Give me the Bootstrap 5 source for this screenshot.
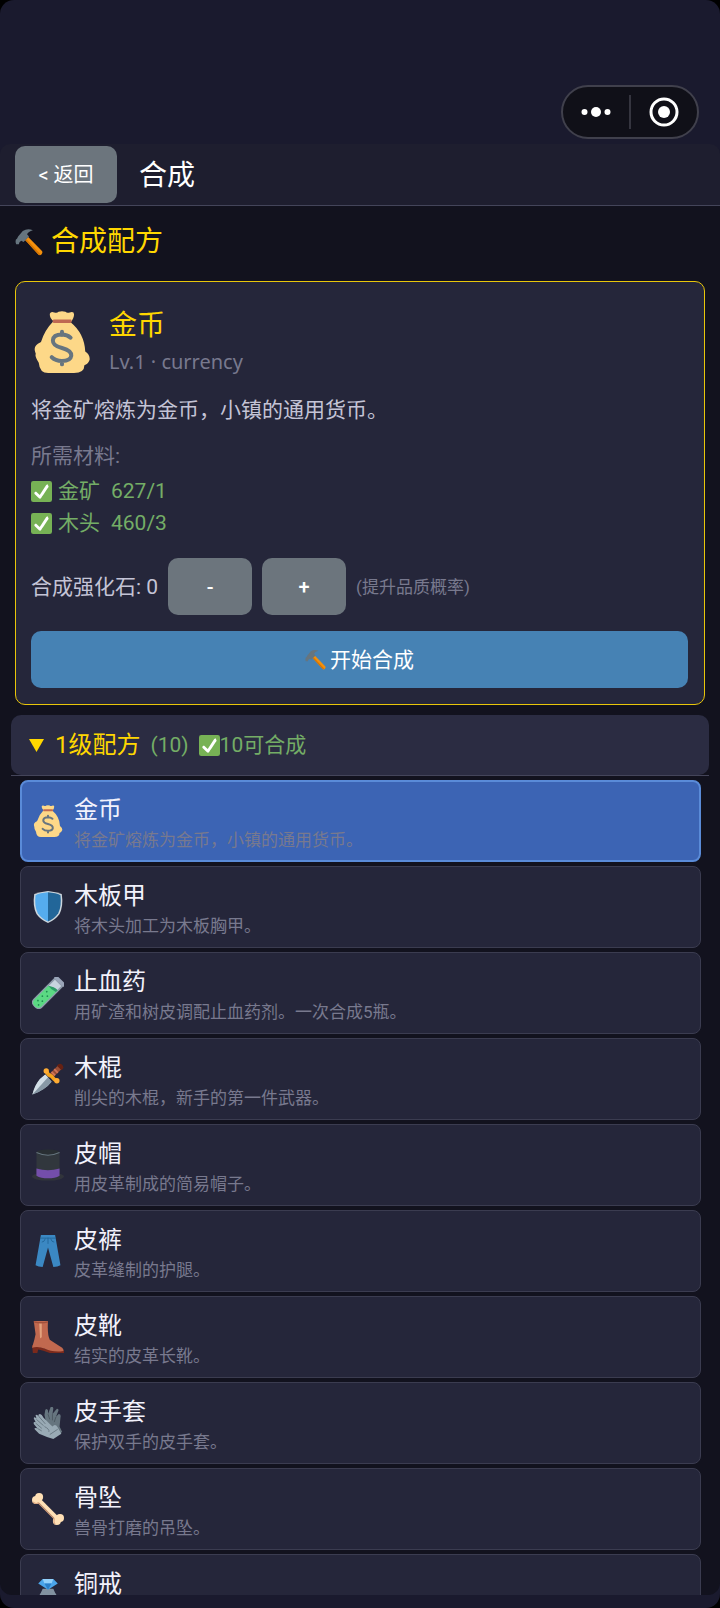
<!DOCTYPE html>
<html lang="zh-CN" data-bs-theme="dark">
<head>
<meta charset="utf-8">
<meta name="viewport" content="width=device-width, initial-scale=1">
<title>合成</title>
<link href="https://cdn.jsdelivr.net/npm/bootstrap@5.3.0/dist/css/bootstrap.min.css" rel="stylesheet">
<style>
  html { background: #000; }
  body { background: #000; color: #e8e8f4; font-family: Roboto, "Noto Sans CJK SC", sans-serif; font-size: 21px; line-height: 32px; }
  .app { background: #1a1a2e; border-radius: 14px; overflow: hidden; }
  .status-area { height: 144px; padding: 0 21px 5px; }
  .capsule { width: 138px; height: 54px; border: 2px solid #40404c; border-radius: 27px; background: #101018; }
  .capsule button { flex: 1; height: 100%; padding: 0; border: 0; background: none; }
  .capsule .split { width: 2px; height: 34px; background: #35353f; }
  .topbar { background: #1e1e2f; border-bottom: 1px solid #44455a; padding: 2px 15px; border-radius: 10px 10px 0 0; gap: 22px; }
  .heading-text { font-size: 28px; line-height: 40px; font-weight: 400; }
  .page-name { padding-top: 2px; }
  .btn-game { --bs-btn-font-size: 20px; --bs-btn-border-radius: 10px; --bs-btn-border-width: 0; --bs-btn-color: #fff; height: 57px; line-height: 30px; }
  .btn-grey { --bs-btn-bg: #6c757d; --bs-btn-hover-bg: #5c636a; }
  .btn-steel { --bs-btn-bg: #4682b4; --bs-btn-hover-bg: #3c729f; --bs-btn-font-size: 21px; }
  .btn-back { width: 102px; }
  .btn-step { width: 84px; --bs-btn-font-weight: 500; }
  .content { background: #12121e; overflow-y: auto; scrollbar-width: none; min-height: 0; border-radius: 0 0 12px 12px; }
  .content::-webkit-scrollbar { display: none; }
  .section-title { margin: 16px 15px 19px; }
  .gold { color: #ffd700; }
  .soft { color: #c4c4d6; }
  .dim { color: #78798e; }
  .ok { color: #74ad66; }
  .fine { font-size: 17px; line-height: 26px; }
  .kind { font-family: "Noto Sans", sans-serif; font-size: 20px; }
  .recipe { background: #25263a; border: 1px solid #e8c60a; border-radius: 10px; padding: 16px 16px 16px 15px; margin: 0 15px 10px; }
  .needs { margin: 14px 0 3px; }
  .material { gap: 6px; }
  .material .count { margin-left: 5px; }
  .boost { gap: 10px; margin: 19px 0 16px; }
  .emoji-title { width: 28px; height: 28px; flex: none; }
  .emoji-row { width: 32px; height: 32px; flex: none; }
  .emoji-hero { width: 62px; height: 62px; flex: none; }
  .emoji-tick { width: 21px; height: 21px; flex: none; }
  .level-group { margin: 0 11px 4px; border-bottom: 1px solid #44455a; }
  .level { background: #2b2c42; color: inherit; border: 0; border-radius: 10px; height: 60px; padding: 0 16px; gap: 10px; }
  .level-name { font-size: 24px; }
  .entries { padding: 0 19px 4px 20px; gap: 4px; }
  .entry { background: #25263a; color: inherit; border: 1px solid #3b3c50; border-radius: 8px; height: 82px; padding: 0 11px; gap: 10px; }
  .entry.active { background: #3c64b4; border: 2px solid #5a8bd8; padding: 0 10px; }
  .entry-name { font-size: 24px; line-height: 34px; padding-top: 3px; color: #f2f2fc; }
  .entry-note { font-size: 17px; line-height: 26px; }
  .home-area { height: 13px; flex: none; }
</style>
</head>
<body>
<svg class="d-none" xmlns="http://www.w3.org/2000/svg">
  <symbol id="i-hammer" viewBox="0 0 36 36">
    <path d="M13 15.500L17 11.500 35 30Q36 32 34 34 32 36 30 34Z" fill="#f4900c"/>
    <path d="M13 15.500L14.500 14 33 34Q31.500 35.500 30 34Z" fill="#d67503"/>
    <path d="M1 15Q0 19 1.500 21L5 21Q5 18 8 16.500L11 18 18 11 15.500 8Q17 5 23 3 16 0 10 4L4 11Q3 14 1 15Z" fill="#66757f"/>
  </symbol>
  <symbol id="i-bag" viewBox="0 0 36 36">
    <path d="M13 6Q10.500 3.500 11 1.500 11.500 0 13.500.8 15 1.500 16 .5 18 -.2 20 .5 21 1.500 22.500.8 25 0 25 2 25 4 23 6.500 31 13 31.500 23.500 34.500 25.500 34 28.500 33 31 31 31.500 31 36 25 36H10Q5 36 4.500 30 2 26 2.800 25 1 21 4 19 5.200 18.500 5.800 18 8 11 13 6Z" fill="#fdd888"/>
    <path d="M13 4.900H23.300Q24 6 23.300 7H13Q12 6 13 4.900Z" fill="#bf6952"/>
    <path d="M23 15.500Q21 13.700 18 13.700 13 13.700 12.700 17 12.500 20 18 21.500 23.600 23 23.400 26 23 29 18 29 14 29 12 26.800M18 12V14M18 29V31" fill="none" stroke="#67757f" stroke-width="2.300" stroke-linecap="round"/>
  </symbol>
  <symbol id="i-check" viewBox="0 0 36 36">
    <rect width="36" height="36" rx="4" fill="#77b255"/>
    <path d="M29.280 6.362c-1.156-.751-2.704-.422-3.458.736L14.936 23.877l-5.029-4.650c-1.014-.938-2.596-.875-3.533.138-.937 1.014-.875 2.596.139 3.533l7.209 6.666c.480.445 1.090.665 1.696.665.673 0 1.534-.282 2.099-1.139.332-.506 12.209-18.270 12.209-18.270.752-1.157.421-2.705-.736-3.458z" fill="#fff"/>
  </symbol>
  <symbol id="i-shield" viewBox="0 0 36 36">
    <path d="M18 0Q27 1 33.500 3.500 35.500 17 31 26 26 33 18 36 10 33 5 26 .5 17 2.500 3.500 9 1 18 0Z" fill="#ccd6dd"/>
    <path d="M18 1.500Q9 2.300 4 4.700 2.500 17 6.500 25 11 31.500 18 34.300Z" fill="#55acee"/>
    <path d="M18 1.500Q27 2.300 32 4.700 33.500 17 29.500 25 25 31.500 18 34.300Z" fill="#226699"/>
  </symbol>
  <symbol id="i-tube" viewBox="0 0 36 36">
    <g transform="rotate(45 18 18)">
      <path d="M11 -1H25V34Q25 40 18 40 11 40 11 34Z" fill="#8f9bab"/>
      <path d="M13 2H23V34Q23 38.500 18 38.500 13 38.500 13 34Z" fill="#c8d4df"/>
      <path d="M12.500 12L23.500 8V34Q23.500 39 18 39 12.500 39 12.500 34Z" fill="#5bd983"/>
      <path d="M12.500 12Q18 8 23.500 8V11Q18 13 12.500 12Z" fill="#2d9b66"/>
      <rect x="10" y="-3" width="16" height="4" rx="2" fill="#9aa5b8"/>
      <g fill="#1f8d51"><circle cx="16" cy="18" r="1"/><circle cx="20" cy="21" r="1"/><circle cx="16" cy="25" r="1"/><circle cx="20" cy="29" r="1"/><circle cx="16" cy="32" r="1"/><circle cx="20" cy="35" r="1"/></g>
    </g>
  </symbol>
  <symbol id="i-dagger" viewBox="0 0 36 36">
    <path d="M.5 35.500Q3 25 9 18L15 13 22 21Q15 30 .5 35.500Z" fill="#aab8c2"/>
    <path d="M.5 35.500Q5 25 11 19L18 16 22 21Q15 30 .5 35.500Z" fill="#8899a6"/>
    <path d="M.5 35.500Q3 25 9 18L15 13 18 16Z" fill="#d3dfe7"/>
    <path d="M19 13L29 3 33 7 23 17Z" fill="#9a4e35"/>
    <path d="M22 10L26 14M25 7L29 11" stroke="#cf755b" stroke-width="2"/>
    <path d="M28 3Q31-1 34 2 37 6 33 8Z" fill="#662113"/>
    <path d="M16 9Q18 14 22 15 25 19 28 20" fill="none" stroke="#f4a21c" stroke-width="4"/>
    <circle cx="16" cy="9" r="3" fill="#ffac33"/><circle cx="28" cy="20" r="3" fill="#ffac33"/>
  </symbol>
  <symbol id="i-hat" viewBox="0 0 36 36">
    <ellipse cx="18" cy="31" rx="18" ry="4.500" fill="#31343b"/>
    <path d="M5 4V30Q10 33 18 33 26 33 31 30V4Z" fill="#31373d"/>
    <path d="M5 22Q18 26 31 22V30Q26 33 18 33 10 33 5 30Z" fill="#744eaa"/>
    <ellipse cx="18" cy="4" rx="13" ry="3.500" fill="#292f33"/>
    <path d="M5 4Q18 10 31 4" fill="none" stroke="#66757f" stroke-width="1.200"/>
  </symbol>
  <symbol id="i-jeans" viewBox="0 0 36 36">
    <path d="M10 0H26L32 34Q29 36 24 36L18 14 12 36Q7 36 4 34Z" fill="#3b88c3"/>
    <path d="M9 3.500H27M18 3V10M11 8Q14 8 15 4M25 8Q22 8 21 4" fill="none" stroke="#226699" stroke-width="1"/>
  </symbol>
  <symbol id="i-boot" viewBox="0 0 36 36">
    <path d="M0 27L12 30Q20 34 36 33V36H20Q12 33 7 32L6 36H1Z" fill="#7b2a1c"/>
    <path d="M2 0H18Q17 15 20 21 29 27 34 30 37 34 34 34 22 35 14 31 7 28 0 30 3 21 4 15Z" fill="#c1694f"/>
    <path d="M8 1H11V18Q9 21 9 18Z" fill="#e3a27d"/>
    <path d="M2 1Q10 3 18 1" fill="none" stroke="#a0503b" stroke-width="1.500"/>
  </symbol>
  <symbol id="i-gloves" viewBox="0 0 36 36">
    <path d="M14 9L15 3Q17 1 18 4L18 8 21 0Q24-1 24 2L23 8 28 2Q31 2 29 6L27 11 30 8Q33 8 32 12L31 22 34 28 27 32 16 18Z" fill="#66757f"/>
    <path d="M18 8L20 14M23 8L23 15M27 11L25 17" stroke="#4a565f"/>
    <path d="M4 9Q6 8 9 12L7 9Q10 6 13 12L20 19 23 22Q26 18 29 23L33 30 24 36Q17 34 8 30L3 25Q2 23 6 24L2 19Q1 16 4 17L2 13Q2 10 5 13L4 9Z" fill="#99aab5"/>
    <path d="M8 11L15 19M5 14L13 21M4 18L11 24M6 24L11 27M20 31L29 25M14 22Q20 25 19 28" fill="none" stroke="#67757f"/>
  </symbol>
  <symbol id="i-bone" viewBox="0 0 36 36">
    <g fill="#ffe0b5"><path d="M6 9L9 6 30 27 27 30Z"/><circle cx="8" cy="4.500" r="4.500"/><circle cx="4.500" cy="8" r="4.500"/><circle cx="31.500" cy="28" r="4.500"/><circle cx="28" cy="31.500" r="4.500"/></g>
    <path d="M1 10Q4 13 7 11L25 29Q24 33 26 35" fill="none" stroke="#dca57e" stroke-width="1.200"/>
  </symbol>
  <symbol id="i-ring" viewBox="0 0 36 36">
    <circle cx="18" cy="25" r="10" fill="none" stroke="#8a98a5" stroke-width="4"/>
    <path d="M12 11H24L28 20H8Z" fill="#8292a0"/>
    <path d="M12 0H24L29 5 18 12 7 5Z" fill="#4ba5ea"/>
    <path d="M12 0H24L22 5H14Z" fill="#92d0fa"/>
    <path d="M14 5H22L18 12Z" fill="#2a7fc9"/>
  </symbol>
</svg>

<div class="app vh-100 d-flex flex-column">
  <div class="status-area flex-shrink-0 d-flex align-items-end justify-content-end">
    <div class="capsule d-flex align-items-center">
      <button type="button" aria-label="更多" class="d-flex align-items-center justify-content-center">
        <svg width="30" height="12" viewBox="0 0 30 12" fill="#fff"><circle cx="3.500" cy="6" r="3"/><circle cx="15" cy="6" r="5"/><circle cx="26.500" cy="6" r="3"/></svg>
      </button>
      <span class="split"></span>
      <button type="button" aria-label="关闭" class="d-flex align-items-center justify-content-center">
        <svg width="30" height="30" viewBox="0 0 30 30"><circle cx="15" cy="15" r="13" fill="none" stroke="#fff" stroke-width="3"/><circle cx="15" cy="15" r="6" fill="#fff"/></svg>
      </button>
    </div>
  </div>

  <header class="topbar flex-shrink-0 d-flex align-items-center">
    <button type="button" class="btn btn-game btn-grey btn-back px-0">&lt; 返回</button>
    <h1 class="heading-text page-name mb-0">合成</h1>
  </header>

  <main class="content flex-fill">
    <h2 class="heading-text section-title gold d-flex align-items-center gap-2"><svg class="emoji-title"><use href="#i-hammer"/></svg><span>合成配方</span></h2>

    <section class="recipe">
      <div class="d-flex align-items-center mt-2">
        <svg class="emoji-hero"><use href="#i-bag"/></svg>
        <div class="ms-3">
          <div class="heading-text gold">金币</div>
          <div class="kind dim">Lv.1 · currency</div>
        </div>
      </div>
      <div class="soft mt-3">将金矿熔炼为金币，小镇的通用货币。</div>
      <div class="dim needs">所需材料:</div>
      <div class="material ok d-flex align-items-center"><svg class="emoji-tick"><use href="#i-check"/></svg><span>金矿</span><span class="count">627/1</span></div>
      <div class="material ok d-flex align-items-center"><svg class="emoji-tick"><use href="#i-check"/></svg><span>木头</span><span class="count">460/3</span></div>
      <div class="boost d-flex align-items-center">
        <span class="soft">合成强化石: 0</span>
        <button type="button" class="btn btn-game btn-grey btn-step">-</button>
        <button type="button" class="btn btn-game btn-grey btn-step">+</button>
        <span class="dim fine">(提升品质概率)</span>
      </div>
      <button type="button" class="btn btn-game btn-steel w-100 d-flex align-items-center justify-content-center gap-1"><svg class="emoji-tick"><use href="#i-hammer"/></svg><span>开始合成</span></button>
    </section>

    <div class="level-group">
      <button type="button" class="level w-100 d-flex align-items-center text-start" aria-expanded="true">
        <svg width="18" height="18" viewBox="0 0 18 18"><path d="M2 3H17L9.500 16Z" fill="#ffd700"/></svg>
        <span class="level-name gold">1级配方</span>
        <span class="ok">(10)</span>
        <span class="ok d-flex align-items-center"><svg class="emoji-tick"><use href="#i-check"/></svg>10可合成</span>
      </button>
    </div>

    <div class="entries d-flex flex-column">
      <button type="button" class="entry active d-flex align-items-center text-start"><svg class="emoji-row"><use href="#i-bag"/></svg><span><span class="entry-name d-block">金币</span><span class="entry-note dim d-block">将金矿熔炼为金币，小镇的通用货币。</span></span></button>
      <button type="button" class="entry d-flex align-items-center text-start"><svg class="emoji-row"><use href="#i-shield"/></svg><span><span class="entry-name d-block">木板甲</span><span class="entry-note dim d-block">将木头加工为木板胸甲。</span></span></button>
      <button type="button" class="entry d-flex align-items-center text-start"><svg class="emoji-row"><use href="#i-tube"/></svg><span><span class="entry-name d-block">止血药</span><span class="entry-note dim d-block">用矿渣和树皮调配止血药剂。一次合成5瓶。</span></span></button>
      <button type="button" class="entry d-flex align-items-center text-start"><svg class="emoji-row"><use href="#i-dagger"/></svg><span><span class="entry-name d-block">木棍</span><span class="entry-note dim d-block">削尖的木棍，新手的第一件武器。</span></span></button>
      <button type="button" class="entry d-flex align-items-center text-start"><svg class="emoji-row"><use href="#i-hat"/></svg><span><span class="entry-name d-block">皮帽</span><span class="entry-note dim d-block">用皮革制成的简易帽子。</span></span></button>
      <button type="button" class="entry d-flex align-items-center text-start"><svg class="emoji-row"><use href="#i-jeans"/></svg><span><span class="entry-name d-block">皮裤</span><span class="entry-note dim d-block">皮革缝制的护腿。</span></span></button>
      <button type="button" class="entry d-flex align-items-center text-start"><svg class="emoji-row"><use href="#i-boot"/></svg><span><span class="entry-name d-block">皮靴</span><span class="entry-note dim d-block">结实的皮革长靴。</span></span></button>
      <button type="button" class="entry d-flex align-items-center text-start"><svg class="emoji-row"><use href="#i-gloves"/></svg><span><span class="entry-name d-block">皮手套</span><span class="entry-note dim d-block">保护双手的皮手套。</span></span></button>
      <button type="button" class="entry d-flex align-items-center text-start"><svg class="emoji-row"><use href="#i-bone"/></svg><span><span class="entry-name d-block">骨坠</span><span class="entry-note dim d-block">兽骨打磨的吊坠。</span></span></button>
      <button type="button" class="entry d-flex align-items-center text-start"><svg class="emoji-row"><use href="#i-ring"/></svg><span><span class="entry-name d-block">铜戒</span><span class="entry-note dim d-block">&nbsp;</span></span></button>
    </div>
  </main>
  <div class="home-area"></div>
</div>
<script src="https://cdn.jsdelivr.net/npm/bootstrap@5.3.0/dist/js/bootstrap.bundle.min.js"></script>
</body>
</html>
